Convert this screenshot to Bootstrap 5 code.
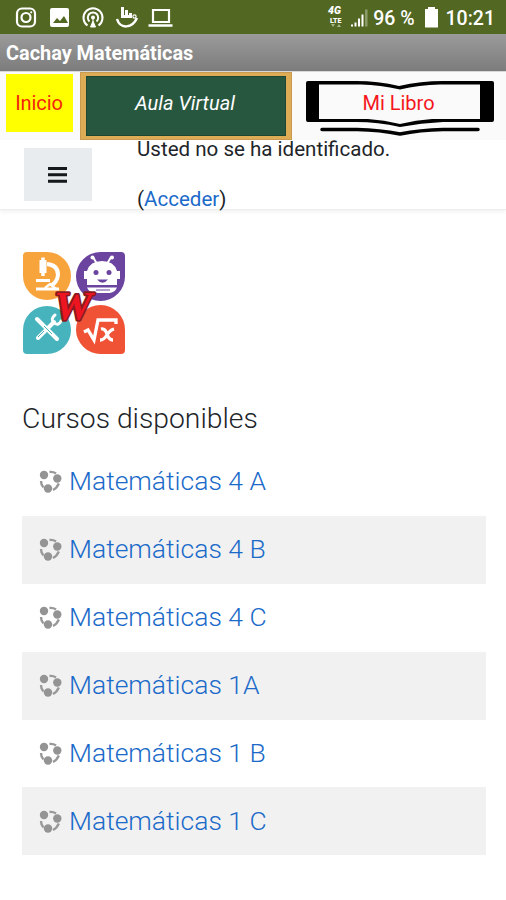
<!DOCTYPE html>
<html lang="es">
<head>
<meta charset="utf-8">
<meta name="viewport" content="width=device-width, initial-scale=1">
<title>Cachay Matemáticas</title>
<link href="https://cdn.jsdelivr.net/npm/bootstrap@5.3.0/dist/css/bootstrap.min.css" rel="stylesheet">
<style>
body{font-family:Roboto,"Liberation Sans",sans-serif;color:#212529;height:900px;overflow:hidden;background:#fff}
svg{display:block;flex:none}
a{color:#1b6ac9;text-decoration:none}
.statusbar{height:34px;background:#526722;color:#fff;padding:0 11px 0 15px;font-size:19.5px;font-weight:500;line-height:34px;white-space:nowrap}
.statusbar span{padding-top:3px}
.signal,.percent{margin-left:5px}
.battery{margin:0 7px 0 9px}
.titlebar{height:37px;background:linear-gradient(#9b9b9b,#7c7c7c);color:#fff;font-size:19.9px;font-weight:700;line-height:38px;padding:1px 0 0 6px}
.tabs{height:69px;background:#fafafa;padding:1px 12px 0 6px;font-size:20px;border-top:1px solid #d8d8d8}
.tabs button{border:0;padding:0;background:none;white-space:nowrap}
.tabs .t-home{width:67px;height:58px;background:#ff0;color:#f5250a;margin-top:1px;letter-spacing:-.1px;padding-right:1px}
.tabs .t-class{width:212px;height:68px;background:#28573f;border:6px solid #dfac56;border-top-width:4px;border-bottom-width:4px;color:#fff;font-style:italic;box-shadow:inset 0 0 0 1px #1f4632;outline:1px solid #c99a50;outline-offset:-1px;margin-left:7px;margin-top:-1px;padding:0 2px 6px 0}
.tabs .t-book{width:188px;height:56px;margin:8px 0 0 14px;color:#f5161c;display:grid}
.tabs .t-book>*{grid-area:1/1}
.tabs .t-book span{padding:7px 3px 0 0}
.topnav{height:70px;padding-left:24px;border-bottom:1px solid #eee;box-shadow:0 2px 4px rgba(0,0,0,.06)}
.menu-btn{width:68px;height:53px;background:#e9ecef;margin-top:8px;border:0;border-radius:0}
.login{margin-left:45px;font-size:20.55px;line-height:50px;margin-top:-16px;white-space:nowrap}
main{padding:41px 20px 0 22px}
h2{font-size:28.3px;font-weight:300;line-height:36px;margin:46px 0 0}
.courses{margin-top:11px}
.course{height:67.9px;padding:0 0 2px 17px;font-size:26.5px;font-weight:300;gap:7px}
.course svg{margin-top:2px}
.course:nth-child(even){background:#f1f1f1}
</style>
</head>
<body>
<svg width="0" height="0" class="position-absolute"><defs>
<symbol id="course-icon" viewBox="0 0 23 23"><g fill="none" stroke="#999" stroke-width="2.400"><path d="M10.500 2Q14 1.500 17 3.500M2 11Q2 15 4.500 17.500M14 20Q18 18 19.800 13.500"/></g><g fill="#949494"><circle cx="5" cy="5" r="4.200"/><circle cx="18.300" cy="8.500" r="4.200"/><circle cx="9" cy="18.500" r="4.200"/></g></symbol>
</defs></svg>
<header>
<div class="statusbar d-flex align-items-center">
<svg width="160" height="34" viewBox="0 0 160 34" fill="none" stroke="#fff" stroke-width="2.200">
<rect x="2" y="8.500" width="18" height="18" rx="5"/><circle cx="11" cy="17.500" r="4.500"/><circle cx="16.200" cy="12.300" r="1.100" fill="#fff" stroke="none"/>
<rect x="35" y="8" width="19" height="19" rx="2" fill="#fff" stroke="none"/><path d="M38 23l4-5 3 3 4-5 4 7z" fill="#526722" stroke="none"/>
<path d="M72.500 25.500a9.500 9.500 0 1 1 11 0M74.500 21.500a5.200 5.200 0 1 1 7 0" stroke-width="2"/><circle cx="78" cy="17.500" r="2" fill="#fff" stroke="none"/><path d="M78 18v3l-2.500 6h5L78 21" fill="#fff" stroke-width="1"/>
<path d="M102 19C105 29 117 29 122 18" stroke-width="2.500"/><path d="M107.500 17V7M111.500 18v-8M115.500 18v-5M106 16.500h10" stroke-width="3"/><circle cx="119.500" cy="16.500" r="1.600" stroke-width="1.200"/>
<path d="M138 10h16v12h-16z"/><path d="M133.500 25.500h24" stroke-width="2.500"/></svg>
<div class="d-flex align-items-center ms-auto">
<svg width="18" height="34" viewBox="0 0 18 34" fill="#fff" font-family="Roboto,sans-serif" font-weight="900"><text x="1" y="14" font-size="10.500" font-style="italic">4G</text><text x="3" y="22.500" font-size="7">LTE</text><path d="M4 24h4l-2 3zM10 27l2-3 2 3z" fill="#a9b68a"/></svg>
<svg class="signal" width="18" height="34" viewBox="0 0 18 34"><path d="M2 26.500v-2M5.500 26.500v-4M9 26.500v-8M12.500 26.500v-12" stroke="#fff" stroke-width="2"/><path d="M16.300 26.500v-17" stroke="#8d9c69" stroke-width="2.500"/></svg>
<span class="percent">96 %</span>
<svg class="battery" width="15" height="34" viewBox="0 0 15 34" fill="#fff"><path d="M4 7h7v2h3v18.500H1V9h3z"/></svg>
<span>10:21</span></div>
</div>
<div class="titlebar">Cachay Matemáticas</div>
<nav class="tabs d-flex align-items-start">
<button class="t-home">Inicio</button>
<button class="t-class">Aula Virtual</button>
<button class="t-book"><svg width="188" height="56" viewBox="0 0 188 56"><path fill="#000" fill-rule="evenodd" d="M2 0H50Q72 0 93 5Q115 0 137 0H186Q188 0 188 2V39Q188 41 186 41H137Q115 42 94 46Q72 41 50 41H2Q0 41 0 39V2Q0 0 2 0ZM13 3.500V38H62Q78 39 94 43Q110 39 126 38H174V3.500H134Q113 4 94 8.500Q74 4 55 3.500Z"/><path d="M16 48.500H51Q74 49 94 53Q114 49 137 48.500H172" fill="none" stroke="#000" stroke-width="3.500" stroke-linecap="round"/></svg><span>Mi Libro</span></button>
</nav>
<div class="topnav d-flex align-items-start">
<button class="menu-btn btn d-flex align-items-center justify-content-center p-0" aria-label="Menú"><svg width="20" height="18" viewBox="0 0 20 18"><path d="M0 2.500h19M0 8.800h19M0 15.200h19" stroke="#16191c" stroke-width="3"/></svg></button>
<div class="login"><div>Usted no se ha identificado.</div><div>(<a href="#">Acceder</a>)</div></div>
</div>
</header>
<main>
<svg width="104" height="104" viewBox="0 0 104 104">
<path fill="#f8a43d" d="M5 1H25A24 24 0 1 1 1 25V5Q1 1 5 1"/><path fill="#6b449f" d="M99 1H79A24.500 24.500 0 1 0 103 25V5Q103 1 99 1"/><path fill="#47b3bd" d="M5 103H25A24 24 0 1 0 1 79V99Q1 103 5 103"/><path fill="#f05236" d="M99 103H79A24.500 24.500 0 1 1 103 79V99Q103 103 99 103"/>
<g fill="none" stroke="#fff"><path d="M21 9V22" stroke-width="7"/><path d="M21 6.500V25" stroke-width="3.500"/><path d="M25 13Q36 14 36 24Q35 31 30 34" stroke-width="4"/><path d="M14 29.500H28M14 38H37" stroke-width="3"/><path d="M23 37l5-4 6 5" stroke-width="2.500"/></g>
<path d="M71 6l4 7M89 6l-4 7" stroke="#fff" stroke-width="2"/><circle cx="70.500" cy="6.500" r="2" fill="#fff"/><circle cx="90" cy="6.500" r="2" fill="#fff"/>
<path fill="#fff" d="M65 20Q68 10 80 10Q92 10 95 20H98V28H95V34H65V28H62V20ZM65 36.500H95Q93 41 88 42H72Q67 41 65 36.500Z"/><circle cx="74" cy="21.500" r="2.500" fill="#6b449f"/><circle cx="87" cy="21.500" r="2.500" fill="#6b449f"/><path d="M75 28.500Q80.500 35 86 28.500Z" fill="#6b449f"/><path d="M74 39h14" stroke="#6b449f"/>
<g fill="none" stroke="#fff" stroke-linecap="round"><path d="M15 68L35 88" stroke-width="4"/><path d="M16 87L32 71" stroke-width="4"/><path d="M33 64q-5 4-1 8q5 3 7-2" stroke-width="3"/></g><path d="M22 75l8 8M16 86l6-6" stroke="#47b3bd" stroke-width="1"/>
<path d="M62 81l4-2 6 10 4-20h18v4" fill="none" stroke="#fff" stroke-width="3.300"/><path d="M79 78q4-1 6 5t6 6M92 78q-4 1-7 6t-7 5" fill="none" stroke="#fff" stroke-width="3.300"/>
<text x="32" y="68" textLength="38" lengthAdjust="spacingAndGlyphs" font-family="Liberation Serif,serif" font-size="39" font-weight="700" font-style="italic" fill="#ed1520" stroke="#8a1a20" stroke-width="3.500" stroke-linejoin="round" paint-order="stroke">W</text>
</svg>
<h2>Cursos disponibles</h2>
<div class="courses">
<div class="course d-flex align-items-center"><svg width="23" height="23"><use href="#course-icon"/></svg><a href="#">Matemáticas 4 A</a></div>
<div class="course d-flex align-items-center"><svg width="23" height="23"><use href="#course-icon"/></svg><a href="#">Matemáticas 4 B</a></div>
<div class="course d-flex align-items-center"><svg width="23" height="23"><use href="#course-icon"/></svg><a href="#">Matemáticas 4 C</a></div>
<div class="course d-flex align-items-center"><svg width="23" height="23"><use href="#course-icon"/></svg><a href="#">Matemáticas 1A</a></div>
<div class="course d-flex align-items-center"><svg width="23" height="23"><use href="#course-icon"/></svg><a href="#">Matemáticas 1 B</a></div>
<div class="course d-flex align-items-center"><svg width="23" height="23"><use href="#course-icon"/></svg><a href="#">Matemáticas 1 C</a></div>
</div>
</main>
<script src="https://cdn.jsdelivr.net/npm/bootstrap@5.3.0/dist/js/bootstrap.bundle.min.js"></script>
</body>
</html>
